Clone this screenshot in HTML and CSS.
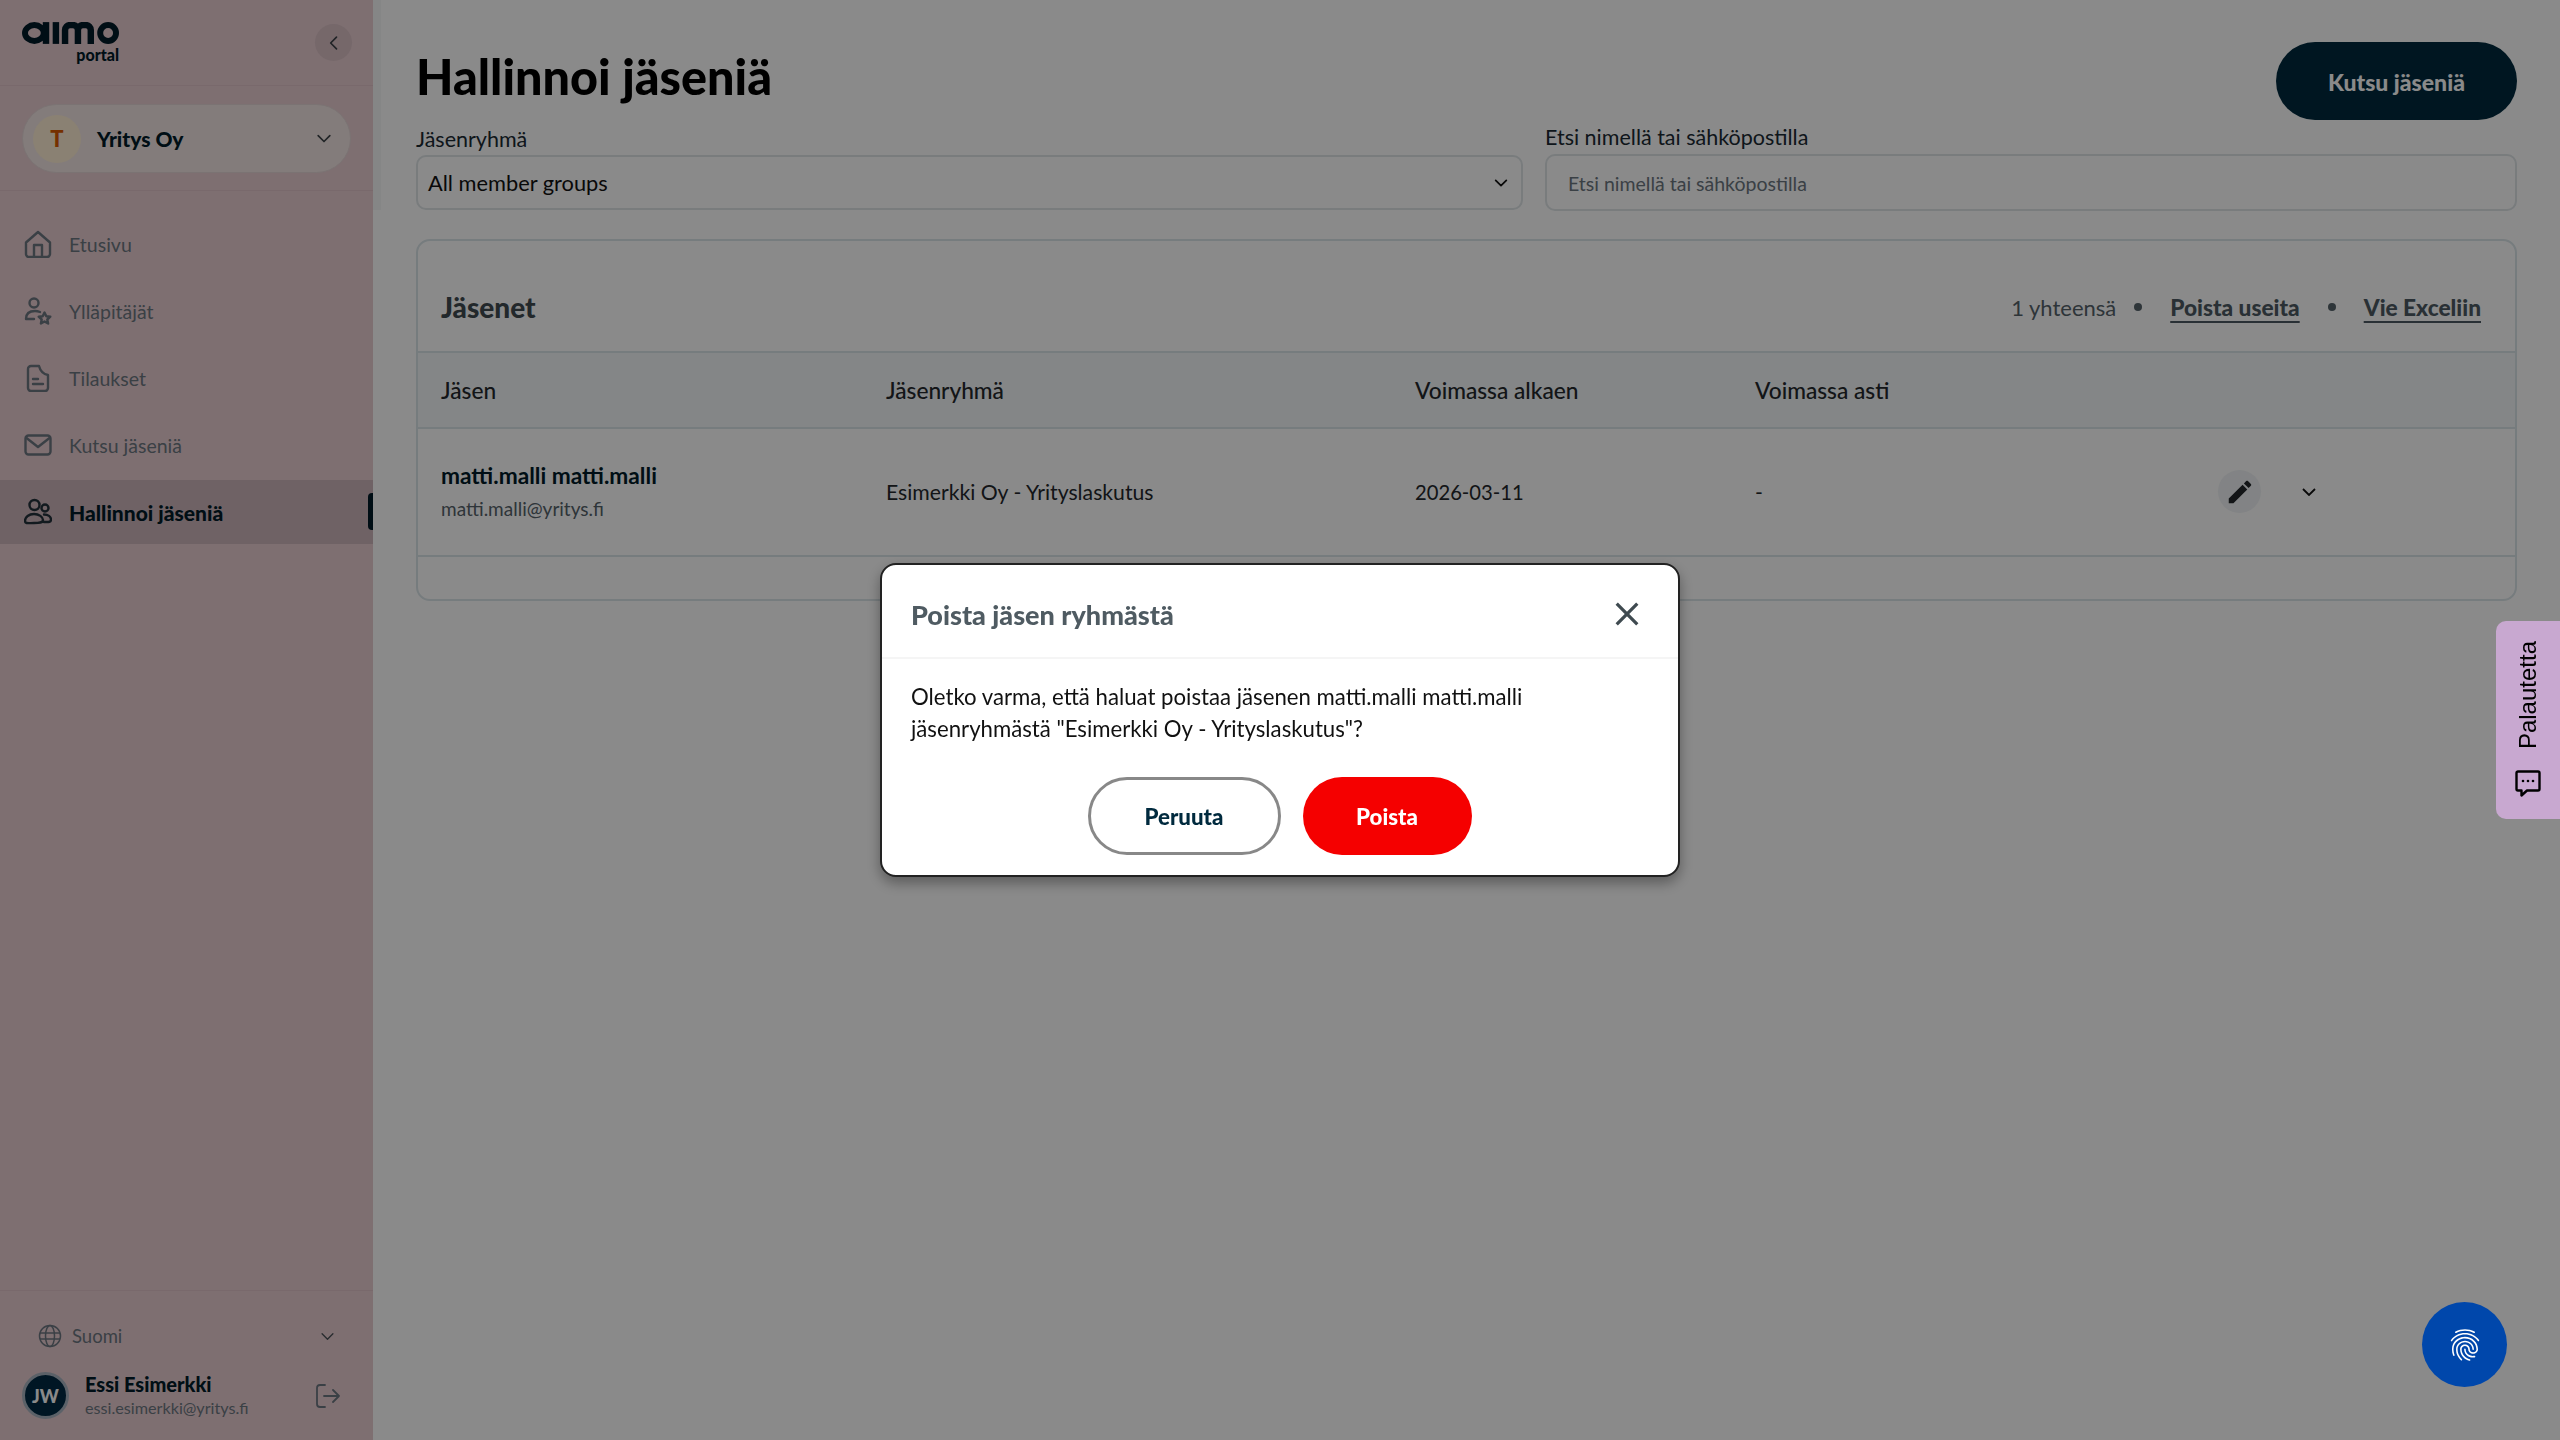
FILE: index.html
```html
<!DOCTYPE html>
<html lang="fi">
<head>
<meta charset="utf-8">
<title>Hallinnoi jäseniä</title>
<link rel="stylesheet" href="styles.css">
</head>
<body>
<div class="app">
  <aside class="sidebar">
    <div class="side-head">
      <div class="logo">
        <svg class="logo-mark" viewBox="0 0 98 22" width="98" height="22" aria-label="aimo">
          <ellipse cx="12.500" cy="11" rx="9.500" ry="8" fill="none" stroke="#001a28" stroke-width="6"/>
          <rect x="21" y="0" width="6.500" height="22" fill="#001a28"/>
          <rect x="31" y="0" width="6.500" height="22" fill="#001a28"/>
          <path d="M43.500 22V8a5 5 0 0 1 5-5h3a5 5 0 0 1 5 5v14M56.500 8a5 5 0 0 1 5-5h3a5 5 0 0 1 5 5v14" fill="none" stroke="#001a28" stroke-width="6.500"/>
          <ellipse cx="87" cy="11" rx="8" ry="8" fill="none" stroke="#001a28" stroke-width="6"/>
        </svg>
        <span class="logo-sub">portal</span>
      </div>
      <button class="collapse"><svg viewBox="0 0 24 24" width="20" height="20"><path d="M15 5l-7 7 7 7" fill="none" stroke="#3c4247" stroke-width="2" stroke-linecap="round" stroke-linejoin="round"/></svg></button>
    </div>
    <div class="side-company">
      <div class="company">
        <span class="company-av">T</span>
        <span class="company-name">Yritys Oy</span>
        <svg class="company-chev" viewBox="0 0 24 24" width="20" height="20"><path d="M5 8l7 7 7-7" fill="none" stroke="#3c4247" stroke-width="2" stroke-linecap="round" stroke-linejoin="round"/></svg>
      </div>
    </div>
    <nav class="nav">
      <a class="nav-item"><svg class="nav-ic" viewBox="0 0 28 28"><path d="M2 12.500 14 2l12 10.500V24a3 3 0 0 1-3 3H5a3 3 0 0 1-3-3zM10 27V15h8v12" /></svg><span>Etusivu</span></a>
      <a class="nav-item"><svg class="nav-ic" viewBox="0 0 28 28"><circle cx="10" cy="6" r="4.500"/><path d="M2 22c0-5 3-8 9-8 2 0 3.500.4 5 1M2 22h8"/><path d="M20.500 15.500l1.800 3.700 4 .5-3 2.800.8 4-3.600-2-3.600 2 .8-4-3-2.800 4-.5z"/></svg><span>Ylläpitäjät</span></a>
      <a class="nav-item"><svg class="nav-ic" viewBox="0 0 28 28"><path d="M4 5a3 3 0 0 1 3-3h8c1 4 4 8 9 9v13a3 3 0 0 1-3 3H7a3 3 0 0 1-3-3zM9 15h5M9 20h10"/></svg><span>Tilaukset</span></a>
      <a class="nav-item"><svg class="nav-ic" viewBox="0 0 28 28"><rect x="1.500" y="4.500" width="25" height="19" rx="3"/><path d="M2.500 7 14 16 25.500 7"/></svg><span>Kutsu jäseniä</span></a>
      <a class="nav-item active"><svg class="nav-ic" viewBox="0 0 28 28"><circle cx="10.500" cy="7" r="5"/><circle cx="21" cy="10" r="3.500"/><path d="M1 23c0-4 4-7 9-7s9 3 9 6-4 3-9 3-9 1-9-2zM20 16.500c4 0 7 2 7 5s-3 2.500-7 2.500"/></svg><span>Hallinnoi jäseniä</span><i class="marker"></i></a>
    </nav>
    <div class="side-foot">
      <div class="lang">
        <svg class="lang-ic" viewBox="0 0 24 24" width="24" height="24"><circle cx="12" cy="12" r="10.500"/><ellipse cx="12" cy="12" rx="4.500" ry="10.500"/><path d="M2 9h20M2 15h20"/></svg>
        <span class="lang-name">Suomi</span>
        <svg class="lang-chev" viewBox="0 0 24 24" width="13" height="13"><path d="M2 7l10 10 10-10" fill="none" stroke="#4a5056" stroke-width="2.400" stroke-linecap="round" stroke-linejoin="round"/></svg>
      </div>
      <div class="user">
        <span class="user-av">JW</span>
        <div class="user-text">
          <div class="user-name">Essi Esimerkki</div>
          <div class="user-mail">essi.esimerkki@yritys.fi</div>
        </div>
        <svg class="logout" viewBox="0 0 24 24" width="24" height="24"><path d="M9 1H4a3 3 0 0 0-3 3v16a3 3 0 0 0 3 3h5M8 12h15M17 6l6 6-6 6"/></svg>
      </div>
    </div>
  </aside>
  <div class="gutter"></div>
  <main class="main">
    <div class="top">
      <h1 class="title">Hallinnoi jäseniä</h1>
      <button class="invite">Kutsu jäseniä</button>
    </div>
    <div class="filters">
      <div class="field f-group">
        <label class="field-label">Jäsenryhmä</label>
        <div class="select"><span>All member groups</span><svg viewBox="0 0 24 24" width="16" height="16"><path d="M4 8l8 8 8-8" fill="none" stroke="#111" stroke-width="2.600" stroke-linecap="round" stroke-linejoin="round"/></svg></div>
      </div>
      <div class="field f-search">
        <label class="field-label search-label">Etsi nimellä tai sähköpostilla</label>
        <div class="search">Etsi nimellä tai sähköpostilla</div>
      </div>
    </div>
    <section class="card">
      <header class="card-head">
        <h2 class="card-title">Jäsenet</h2>
        <div class="card-tools">
          <span class="count">1 yhteensä</span>
          <i class="dot"></i>
          <a class="tool">Poista useita</a>
          <i class="dot"></i>
          <a class="tool">Vie Exceliin</a>
        </div>
      </header>
      <div class="row thead">
        <div class="c1">Jäsen</div>
        <div class="c2">Jäsenryhmä</div>
        <div class="c3">Voimassa alkaen</div>
        <div class="c4">Voimassa asti</div>
      </div>
      <div class="row tbody">
        <div class="c1 member">
          <div class="m-name">matti.malli matti.malli</div>
          <div class="m-mail">matti.malli@yritys.fi</div>
        </div>
        <div class="c2">Esimerkki Oy - Yrityslaskutus</div>
        <div class="c3 date">2026-03-11</div>
        <div class="c4">-</div>
        <div class="actions">
          <button class="edit"><svg viewBox="0 0 24 24" width="30" height="30"><path fill="#23282c" d="M3 17.250V21h3.750L17.810 9.940l-3.750-3.750L3 17.250zM20.710 7.040c.39-.39.39-1.020 0-1.410l-2.340-2.340c-.39-.39-1.020-.39-1.410 0l-1.830 1.830 3.750 3.750 1.830-1.830z"/></svg></button>
          <svg class="row-chev" viewBox="0 0 14 8" width="14" height="8"><path d="M1 1l6 6 6-6" fill="none" stroke="#111" stroke-width="1.800"/></svg>
        </div>
      </div>
      <div class="card-foot"></div>
    </section>
  </main>
</div>

<div class="overlay"></div>

<div class="modal">
  <div class="modal-head">
    <h3 class="modal-title">Poista jäsen ryhmästä</h3>
    <svg class="modal-x" viewBox="0 0 24 24" width="26" height="26"><path d="M2.500 2.500l19 19M21.500 2.500l-19 19" fill="none" stroke="#3f4a50" stroke-width="3"/></svg>
  </div>
  <div class="modal-body">
    <p class="modal-text">Oletko varma, että haluat poistaa jäsenen matti.malli matti.malli<br>jäsenryhmästä "Esimerkki Oy - Yrityslaskutus"?</p>
    <div class="modal-btns">
      <button class="btn btn-ghost">Peruuta</button>
      <button class="btn btn-red">Poista</button>
    </div>
  </div>
</div>

<div class="feedback">
  <span class="feedback-text">Palautetta</span>
  <svg class="feedback-ic" viewBox="0 0 26 28" width="26" height="28"><path d="M3 1.500h20a1.500 1.500 0 0 1 1.500 1.500v16a1.500 1.500 0 0 1-1.500 1.500H12l-5.500 5v-5H3A1.500 1.500 0 0 1 1.500 19V3A1.500 1.500 0 0 1 3 1.500z" fill="none" stroke="#000" stroke-width="2.400" stroke-linejoin="round"/><circle cx="8" cy="11" r="1.300"/><circle cx="13" cy="11" r="1.300"/><circle cx="18" cy="11" r="1.300"/></svg>
</div>

<button class="fab"><svg viewBox="0 0 24 24" width="38" height="38"><path fill="#fff" d="M17.810 4.470c-.08 0-.16-.02-.23-.06C15.660 3.420 14 3 12.010 3c-1.980 0-3.860.47-5.570 1.410-.24.13-.54.04-.68-.2-.13-.24-.04-.55.2-.68C7.820 2.520 9.860 2 12.010 2c2.130 0 3.990.47 6.030 1.520.25.13.34.43.21.67-.09.18-.26.28-.44.28zM3.500 9.720c-.1 0-.2-.03-.29-.09-.23-.16-.28-.47-.12-.7.99-1.400 2.250-2.500 3.750-3.270C9.980 4.040 14 4.030 17.150 5.650c1.500.77 2.760 1.860 3.750 3.250.16.22.11.54-.12.7-.23.16-.54.11-.7-.12-.9-1.260-2.040-2.250-3.390-2.940-2.870-1.470-6.540-1.470-9.400.01-1.360.7-2.500 1.700-3.400 2.960-.08.14-.23.21-.39.21zm6.250 12.070c-.13 0-.26-.05-.35-.15-.87-.87-1.340-1.430-2.010-2.640-.69-1.230-1.050-2.730-1.050-4.340 0-2.970 2.540-5.390 5.660-5.390s5.660 2.420 5.660 5.390c0 .28-.22.5-.5.5s-.5-.22-.5-.5c0-2.420-2.090-4.390-4.660-4.390-2.570 0-4.660 1.970-4.660 4.390 0 1.440.32 2.770.93 3.850.64 1.150 1.080 1.640 1.850 2.420.19.2.19.51 0 .71-.11.1-.24.15-.37.15zm7.170-1.850c-1.190 0-2.240-.3-3.100-.89-1.490-1.010-2.380-2.650-2.380-4.390 0-.28.22-.5.5-.5s.5.22.5.5c0 1.410.72 2.740 1.940 3.560.71.48 1.540.71 2.540.71.24 0 .64-.03 1.040-.1.270-.05.53.13.58.41.05.27-.13.53-.41.58-.57.11-1.070.12-1.210.12zM14.910 22c-.04 0-.09-.01-.13-.02-1.590-.44-2.630-1.030-3.720-2.100-1.400-1.390-2.170-3.240-2.170-5.220 0-1.620 1.380-2.940 3.080-2.940 1.700 0 3.080 1.320 3.080 2.940 0 1.070.93 1.940 2.080 1.940s2.080-.87 2.080-1.940c0-3.770-3.250-6.830-7.250-6.830-2.840 0-5.440 1.580-6.610 4.030-.39.81-.59 1.760-.59 2.800 0 .78.07 2.010.67 3.610.1.260-.03.55-.29.64-.26.1-.55-.04-.64-.29-.49-1.310-.73-2.610-.73-3.960 0-1.200.23-2.290.68-3.240 1.330-2.790 4.280-4.600 7.510-4.600 4.550 0 8.250 3.510 8.250 7.830 0 1.620-1.380 2.940-3.080 2.940s-3.080-1.320-3.080-2.940c0-1.070-.93-1.940-2.080-1.940s-2.080.87-2.080 1.940c0 1.710.66 3.310 1.870 4.510.95.94 1.860 1.460 3.270 1.850.27.07.42.35.35.61-.05.23-.26.38-.47.38z"/></svg></button>
</body>
</html>
```
FILE: styles.css
```css
* { box-sizing: border-box; }
html, body { margin: 0; height: 100%; }
body { font-family: "Lato", "Noto Sans", sans-serif; color: #111; background: #fff; overflow: hidden; }
button { font-family: inherit; border: 0; padding: 0; background: none; }
h1, h2, h3, p { margin: 0; }

.app { display: flex; height: 1440px; }

.sidebar { width: 373px; flex: none; display: flex; flex-direction: column; background: #e9cdd1; }
.gutter { width: 8px; height: 210px; flex: none; background: #f6f7f8; }
.side-head { height: 86px; flex: none; display: flex; align-items: center; justify-content: space-between; padding: 0 21px 0 22px; border-bottom: 1px solid #dfc3c7; }
.logo { display: flex; flex-direction: column; align-items: flex-end; width: 97px; }
.logo-mark { display: block; width: 97px; }
.logo-sub { font-size: 16px; line-height: 18px; font-weight: 900; color: #001a28; margin-top: 2px; }
.collapse { width: 37px; height: 37px; border-radius: 50%; background: #dac0c5; display: flex; align-items: center; justify-content: center; }

.side-company { height: 105px; flex: none; padding: 18px 22px 0; border-bottom: 1px solid #dfc3c7; }
.company { height: 69px; border-radius: 35px; background: #f2e6e4; border: 1px solid #e3d4d4; display: flex; align-items: center; padding: 0 16px 0 10px; }
.company-av { width: 48px; height: 48px; border-radius: 50%; background: #ffeed4; color: #d95a00; font-weight: 900; font-size: 22px; display: flex; align-items: center; justify-content: center; flex: none; }
.company-name { font-size: 21px; font-weight: 900; color: #001a28; margin-left: 16px; flex: 1; }

.nav { padding-top: 21px; display: flex; flex-direction: column; gap: 3px; flex: 1; }
.nav-item { position: relative; height: 64px; display: flex; align-items: center; padding-left: 24px; font-size: 19.500px; color: #6c7680; }
.nav-ic { width: 28px; height: 28px; flex: none; margin-right: 17px; fill: none; stroke: #6c7680; stroke-width: 2.400; stroke-linejoin: round; stroke-linecap: round; }
.nav-item.active { background: #cdb5bb; color: #001a28; font-weight: 900; font-size: 21px; }
.nav-item.active .nav-ic { stroke: #22303a; }
.marker { position: absolute; right: 0; top: 13px; width: 5px; height: 37px; background: #001a28; border-radius: 4px 0 0 4px; }

.side-foot { height: 150px; flex: none; border-top: 1px solid #dfc3c7; padding: 33px 22px 0; }
.lang { display: flex; align-items: center; height: 24px; padding-left: 16px; }
.lang-ic { fill: none; stroke: #6c7680; stroke-width: 1.500; flex: none; }
.lang-name { margin-left: 10px; font-size: 18.500px; color: #6c7680; flex: 1; }
.lang-chev { margin-right: 17px; }
.user { display: flex; align-items: center; margin-top: 23px; }
.user-av { width: 47px; height: 47px; border-radius: 50%; background: #002a44; border: 3px solid #a9b4c0; color: #fff; font-size: 18px; font-weight: 900; display: flex; align-items: center; justify-content: center; flex: none; }
.user-text { margin-left: 16px; flex: 1; }
.user-name { font-size: 20px; line-height: 24px; font-weight: 900; color: #001a28; padding-top: 1px; }
.user-mail { font-size: 16.200px; line-height: 24px; color: #6c7680; }
.logout { fill: none; stroke: #6c7680; stroke-width: 1.800; stroke-linecap: round; stroke-linejoin: round; margin-right: 11px; }

.main { flex: 1; min-width: 0; padding: 42px 43px 0 35px; }
.top { display: flex; justify-content: space-between; align-items: flex-start; height: 78px; }
.title { font-size: 48.500px; line-height: 68px; font-weight: 900; color: #000; }
.invite { width: 241px; height: 78px; border-radius: 39px; background: #002a3e; color: #fff; font-size: 23px; font-weight: 900; padding-top: 2px; }

.filters { display: flex; gap: 22px; margin-top: 3px; }
.f-group { width: 1107px; flex: none; }
.f-search { flex: 1; }
.field-label { display: block; font-size: 21.500px; line-height: 32px; color: #1a2a33; }
.search-label { margin-top: -2px; line-height: 32px; }
.select { height: 55px; border: 2px solid #dfe5e8; border-radius: 10px; display: flex; align-items: center; justify-content: space-between; padding: 0 12px 0 10px; font-size: 21.800px; color: #111; }
.search { height: 57px; border: 2px solid #dfe5e8; border-radius: 10px; display: flex; align-items: center; padding-left: 21px; padding-top: 2px; font-size: 19.500px; color: #6c7680; margin-top: 1px; }

.card { margin-top: 28px; height: 362px; border: 2px solid #dbe5e9; border-radius: 14px; overflow: hidden; display: flex; flex-direction: column; }
.card-head { height: 112px; flex: none; display: flex; align-items: center; justify-content: space-between; padding: 22px 34px 0 23px; border-bottom: 2px solid #dbe5e9; }
.card-title { font-size: 28px; font-weight: 900; color: #3f4a50; }
.card-tools { display: flex; align-items: center; font-size: 22px; color: #55626a; }
.count { margin-right: -10px; }
.dot { width: 8px; height: 8px; border-radius: 50%; background: #55626a; margin: 0 28px; }
.tool { font-size: 22.700px; font-weight: 900; color: #4d5a62; text-decoration: underline; text-decoration-thickness: 2px; text-underline-offset: 5px; }
.row { display: grid; grid-template-columns: 445px 529px 340px 1fr; align-items: center; padding-left: 23px; position: relative; }
.thead { height: 76px; flex: none; background: #f4f7f9; border-bottom: 2px solid #dbe5e9; font-size: 22.700px; font-weight: 500; color: #23282c; }
.tbody { height: 128px; flex: none; border-bottom: 2px solid #dbe5e9; font-size: 21.200px; color: #23282c; padding-bottom: 1px; }
.date { font-size: 20.200px; }
.member { padding-top: 3px; }
.m-name { font-size: 22.700px; line-height: 32px; font-weight: 700; color: #001a28; }
.m-mail { font-size: 19px; line-height: 34px; color: #55626a; }
.actions { position: absolute; left: 1800px; top: 41px; display: flex; align-items: center; gap: 41px; }
.edit { width: 43px; height: 43px; border-radius: 50%; background: #f0f3f5; display: flex; align-items: center; justify-content: center; }
.card-foot { flex: 1; }

.overlay { position: fixed; inset: 0; background: rgba(0, 0, 0, .46); }

.modal { position: fixed; left: 880px; top: 563px; width: 800px; height: 314px; background: #fff; border: 2px solid #222; border-radius: 16px; box-shadow: 0 6px 14px rgba(0,0,0,.35); display: flex; flex-direction: column; }
.modal-head { height: 94px; flex: none; display: flex; align-items: center; justify-content: space-between; padding: 6px 38px 0 29px; border-bottom: 2px solid #f5f5f5; }
.modal-title { font-size: 27px; font-weight: 900; color: #4f5b62; }
.modal-x { margin-top: 0; }
.modal-body { padding: 22px 30px 0 29px; }
.modal-text { font-size: 22.200px; line-height: 32px; color: #111; }
.modal-btns { display: flex; justify-content: center; gap: 22px; margin-top: 32px; }
.btn { height: 78px; border-radius: 39px; font-size: 22.300px; font-weight: 900; }
.btn-ghost { width: 193px; background: #fff; border: 3px solid #888; color: #002a3e; }
.btn-red { width: 169px; background: #f50000; color: #fff; }

.feedback { position: fixed; right: 0; top: 621px; width: 64px; height: 198px; background: #c8a8d0; border-radius: 10px 0 0 10px; display: flex; flex-direction: column; align-items: center; padding-top: 20px; }
.feedback-text { writing-mode: vertical-rl; transform: rotate(180deg); font-family: "Liberation Sans", Arial, sans-serif; font-size: 24px; line-height: 26px; color: #000; }
.feedback-ic { margin-top: 21px; }

.fab { position: fixed; left: 2422px; top: 1302px; width: 85px; height: 85px; border-radius: 50%; background: #0047ab; display: flex; align-items: center; justify-content: center; }
```
